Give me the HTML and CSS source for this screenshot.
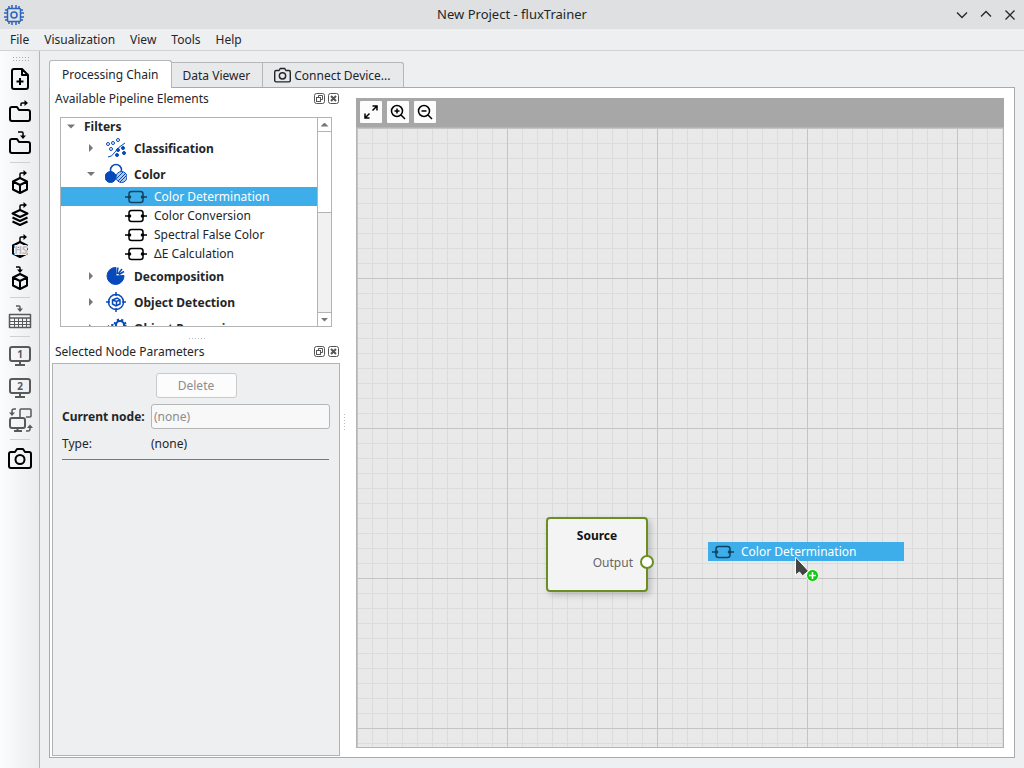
FILE: index.html
```html
<!DOCTYPE html>
<html lang="en">
<head>
<meta charset="utf-8">
<title>New Project - fluxTrainer</title>
<link rel="stylesheet" href="styles.css">
</head>
<body>
<svg class="defs" aria-hidden="true">
  <symbol id="node" viewBox="0 0 22 16"><rect x="4" y="2.500" width="14" height="11" rx="2.500"/><path d="M0 8h5M17 8h5"/><circle class="dot" cx="4.500" cy="8" r="1.800"/><circle class="dot" cx="17.500" cy="8" r="1.800"/></symbol>
  <symbol id="camera" viewBox="0 0 24 24"><path d="M1 7Q1 5 3 5h4l2-3h6l2 3h4q2 0 2 2v12q0 2-2 2H3q-2 0-2-2z"/><circle cx="12" cy="12.500" r="4.500"/></symbol>
  <symbol id="float" viewBox="0 0 11 11"><rect x=".5" y=".5" width="10" height="10" rx="2"/><rect x="2.500" y="4.500" width="4" height="4"/><path d="M4.500 4.500v-2h4v4h-2"/></symbol>
  <symbol id="close" viewBox="0 0 11 11"><rect x=".5" y=".5" width="10" height="10" rx="2"/><path stroke-width="2" d="m3 3 5 5m0-5-5 5"/></symbol>
  <symbol id="cube" viewBox="0 0 24 24"><path d="m12 8 7 3.500v8L12 23l-7-3.500v-8zM5 11.500l7 3.500 7-3.500M12 15v8"/></symbol>
  <symbol id="out" viewBox="0 0 24 24"><path stroke-width="1.500" d="M12 8V4q0-1 1-1h4"/><path class="head" d="M15.500 0 19 3l-3.500 3z"/></symbol>
  <symbol id="in" viewBox="0 0 24 24"><path stroke-width="1.500" d="M8 1h3q1 0 1 1v3"/><path class="head" d="M9 3.500 12 7l3-3.500z"/></symbol>
</svg>
<header class="titlebar">
  <svg class="app-icon" viewBox="0 0 20 20"><path d="M5 1v3M8 0v4M12 0v4M15 1v3M5 16v3M8 16v4M12 16v4M15 16v3M1 5h3M0 8h4M0 12h4M1 15h3M16 5h3M16 8h4M16 12h4M16 15h3"/><rect x="3.500" y="3.500" width="13" height="13" rx="1"/><circle cx="10" cy="10" r="3"/></svg>
  <h1>New Project - fluxTrainer</h1>
  <div class="window-buttons">
    <button aria-label="Minimize"><svg viewBox="0 0 12 12"><path d="m1 3.500 5 5 5-5"/></svg></button>
    <button aria-label="Maximize"><svg viewBox="0 0 12 12"><path d="m1 7.500 5-5 5 5"/></svg></button>
    <button aria-label="Close window"><svg viewBox="0 0 12 12"><path d="m1.500 1.500 9 9m0-9-9 9"/></svg></button>
  </div>
</header>
<nav class="menubar">
  <button>File</button><button>Visualization</button><button>View</button><button>Tools</button><button>Help</button>
</nav>
<div class="workspace">
  <aside class="toolbar">
    <div class="grip"></div>
    <button aria-label="New project"><svg viewBox="0 0 24 24"><path d="M6 2h8l6 6v12q0 2-2 2H6q-2 0-2-2V4q0-2 2-2zM14 2v6h6M12 11v7M8.500 14.500h7"/></svg></button>
    <button aria-label="Open project"><svg viewBox="0 0 24 24"><path d="M2 10q0-2 2-2h5l2 3h9q2 0 2 2v7q0 2-2 2H4q-2 0-2-2z"/><path stroke-width="1.500" d="M13 7V5q0-1 1-1h4"/><path class="head" d="M16.500 1 20 4l-3.500 3z"/></svg></button>
    <button aria-label="Save project"><svg viewBox="0 0 24 24"><path d="M2 10q0-2 2-2h5l2 3h9q2 0 2 2v7q0 2-2 2H4q-2 0-2-2z"/><path stroke-width="1.500" d="M10 1h4q1 0 1 1v4"/><path class="head" d="M12 4.500 15 8l3-3.500z"/></svg></button>
    <hr>
    <button aria-label="Export cube"><svg viewBox="0 0 24 24"><use href="#cube"/><use href="#out"/></svg></button>
    <button aria-label="Export layers"><svg viewBox="0 0 24 24"><path d="m12 8 7.500 3.500L12 15l-7.500-3.500zM4.500 15.500 12 19l7.500-3.500M4.500 19.500 12 23l7.500-3.500"/><use href="#out"/></svg></button>
    <button aria-label="Export HS cube"><svg viewBox="0 0 24 24"><use href="#cube"/><use href="#out"/><text class="hs" x="13" y="20">HS</text></svg></button>
    <button aria-label="Import cube"><svg viewBox="0 0 24 24"><use href="#cube"/><use href="#in"/></svg></button>
    <hr>
    <button class="muted" aria-label="Import table"><svg viewBox="0 0 24 24"><path stroke-width="1.500" d="M1.500 9.500h21v13h-21zM1.500 13h21"/><path stroke-width="1" d="M1.500 16.500h21M1.500 19.500h21M6.500 13v9M10.500 13v9M14.500 13v9M18.500 13v9"/><use href="#in"/></svg></button>
    <hr>
    <button class="muted" aria-label="Monitor 1"><svg viewBox="0 0 24 24"><rect x="2" y="3" width="20" height="14" rx="2"/><path d="M12 17v4M7 21h10"/><text x="12" y="14">1</text></svg></button>
    <button class="muted" aria-label="Monitor 2"><svg viewBox="0 0 24 24"><rect x="2" y="3" width="20" height="14" rx="2"/><path d="M12 17v4M7 21h10"/><text x="12" y="14">2</text></svg></button>
    <button class="muted" aria-label="Swap monitors"><svg viewBox="0 0 24 24"><path stroke-width="1.500" d="M12 9V2q0-1 1-1h9q1 0 1 1v6q0 1-1 1h-4M8 1H6Q4 1 4 3v3M18 23h2q2 0 2-2v-2"/><path class="head" d="m1 4.500 3 3.500 3-3.500zM19 20l3-3.500 3 3.500z"/><rect x="2" y="10" width="15" height="10" rx="2"/><path d="M9.500 20v3M6 23h8"/></svg></button>
    <hr>
    <button aria-label="Capture"><svg><use href="#camera"/></svg></button>
  </aside>
  <main class="content">
    <div class="tabs" role="tablist">
      <button class="tab active" role="tab" aria-selected="true">Processing Chain</button>
      <button class="tab" role="tab">Data Viewer</button>
      <button class="tab" role="tab"><svg><use href="#camera"/></svg>Connect Device...</button>
    </div>
    <section class="page">
      <div class="docks">
        <div class="dock-title"><h2>Available Pipeline Elements</h2><button aria-label="Float elements"><svg><use href="#float"/></svg></button><button aria-label="Close elements"><svg><use href="#close"/></svg></button></div>
        <div class="tree-box">
          <ul class="tree" role="tree">
            <li class="root" role="treeitem"><i class="arrow open"></i><b>Filters</b></li>
            <li class="group" role="treeitem"><i class="arrow"></i>
              <svg viewBox="0 0 22 22"><path d="M3 20q4 0 7-5t10-9" /><circle cx="3" cy="7" r="1.500"/><circle cx="8" cy="6" r="1.500"/><circle cx="13" cy="3" r="1.500"/><circle cx="6" cy="12" r="1.500"/><g class="fill"><circle cx="18" cy="11" r="1.500"/><circle cx="13" cy="13" r="1.500"/><circle cx="19" cy="16" r="1.500"/><circle cx="12" cy="18" r="1.500"/></g></svg><b>Classification</b></li>
            <li class="group" role="treeitem"><i class="arrow open"></i>
              <svg viewBox="0 0 22 22"><circle stroke-width="1.500" cx="11" cy="7" r="5.500"/><circle class="fill" cx="5.500" cy="14" r="5.500"/><circle class="pale" cx="16.500" cy="14" r="5.500"/><path d="m12 15 6-6m-5 9 8-8m-6 9 6-6"/></svg><b>Color</b></li>
            <li class="leaf selected" role="treeitem" aria-selected="true"><svg><use href="#node"/></svg><span>Color Determination</span></li>
            <li class="leaf" role="treeitem"><svg><use href="#node"/></svg><span>Color Conversion</span></li>
            <li class="leaf" role="treeitem"><svg><use href="#node"/></svg><span>Spectral False Color</span></li>
            <li class="leaf" role="treeitem"><svg><use href="#node"/></svg><span>ΔE Calculation</span></li>
            <li class="group" role="treeitem"><i class="arrow"></i>
              <svg viewBox="0 0 22 22"><path class="fill" d="M11 2.500A8.500 8.500 0 1 0 19 10.500L11 11z"/><path stroke-width="1.500" d="m12 9 1-6.500M13 9l4-5M14 9.500l5-3"/></svg><b>Decomposition</b></li>
            <li class="group" role="treeitem"><i class="arrow"></i>
              <svg viewBox="0 0 22 22"><circle stroke-width="1.500" cx="11" cy="11" r="7.500"/><path stroke-width="1.500" d="M11 1v4M11 17v4M1 11h4M17 11h4M7.500 9 12 7l3 2v4l-4 2-3.500-2zM7.500 9l4 1.500L15 9m-3.500 1.500V15"/></svg><b>Object Detection</b></li>
            <li class="group" role="treeitem"><i class="arrow"></i>
              <svg viewBox="0 0 22 22"><circle class="gear" cx="15" cy="8" r="5"/><circle stroke-width="2" cx="15" cy="8" r="4"/><circle class="gear" cx="7" cy="13" r="4.500"/><circle class="fill" cx="7" cy="13" r="4"/></svg><b>Object Processing</b></li>
          </ul>
          <div class="scrollbar"><button aria-label="Scroll up"><i class="up"></i></button><div class="track"><div class="thumb"></div></div><button aria-label="Scroll down"><i class="down"></i></button></div>
        </div>
        <div class="splitter-h"></div>
        <div class="dock-title"><h2>Selected Node Parameters</h2><button aria-label="Float parameters"><svg><use href="#float"/></svg></button><button aria-label="Close parameters"><svg><use href="#close"/></svg></button></div>
        <div class="params">
          <button class="delete" disabled>Delete</button>
          <div class="fields">
            <label for="current"><b>Current node:</b></label><input id="current" type="text" value="(none)" disabled>
            <span>Type:</span><span>(none)</span>
          </div>
          <hr>
        </div>
      </div>
      <div class="splitter-v"></div>
      <div class="editor">
        <div class="editor-bar">
          <button aria-label="Fit view"><svg viewBox="0 0 16 16"><path d="m9.500 6.500 4.500-4.500M9.500 2H14v4.500M6.500 9.500 2 14m0-4.500V14h4.500"/></svg></button>
          <button aria-label="Zoom in"><svg viewBox="0 0 16 16"><circle cx="7" cy="7" r="5.500"/><path d="m11 11 4 4M7 4.500v5M4.500 7h5"/></svg></button>
          <button aria-label="Zoom out"><svg viewBox="0 0 16 16"><circle cx="7" cy="7" r="5.500"/><path d="m11 11 4 4M4.500 7h5"/></svg></button>
        </div>
        <div class="canvas">
          <div class="source"><b>Source</b><span>Output</span><i class="port"></i></div>
          <div class="drag"><svg><use href="#node"/></svg>Color Determination</div>
          <svg class="cursor" viewBox="0 0 26 28"><path class="pointer" d="M1.500 1v18l4-3 3 4 6-5z"/><circle cx="18.500" cy="19.500" r="6"/><path class="plus" d="M18.500 16v7M15 19.500h7"/></svg>
        </div>
      </div>
    </section>
  </main>
</div>
</body>
</html>
```
FILE: styles.css
```css
* { box-sizing: border-box; }
body { margin: 0; min-height: 100vh; display: flex; flex-direction: column; background: #eeeff1; color: #232629; font: 12px/19px "Noto Sans", sans-serif; }
button { margin: 0; padding: 0; border: 0; background: none; color: inherit; font: inherit; display: flex; align-items: center; justify-content: center; }
svg { fill: none; stroke: currentColor; flex: none; }
.defs { position: absolute; width: 0; height: 0; }
h1, h2 { margin: 0; font-size: 12px; font-weight: 400; }

.titlebar { height: 29px; display: grid; grid-template-columns: 80px 1fr 80px; align-items: center; background: #dee0e2; }
.titlebar h1 { font-size: 13px; text-align: center; }
.app-icon { width: 20px; height: 20px; margin-left: 4px; color: #2c63bd; stroke-width: 1.500; }
.window-buttons { display: flex; justify-content: flex-end; gap: 12px; padding-right: 8px; }
.window-buttons svg { width: 12px; height: 12px; stroke-width: 1.300; }
.menubar { height: 22px; display: flex; gap: 15px; padding-left: 10px; border-bottom: 1px solid #d1d3d5; }

.workspace { flex: 1; display: flex; }
.toolbar { width: 40px; border-right: 1px solid #b5b6b8; background: linear-gradient(90deg, #fbfcfe, #ebecee); color: #000; }
.grip { width: 18px; height: 6px; margin: 5px auto 1px 12px; background: radial-gradient(circle, #aaa 0 1px, transparent 1px) 0 0 / 3px 3px; }
.toolbar button { width: 39px; height: 32px; }
.toolbar svg { width: 24px; height: 24px; stroke-width: 2; overflow: visible; stroke-linejoin: round; }
.head { fill: currentColor; stroke: none; }
.toolbar hr { width: 20px; height: 1px; margin: 3px 10px; border: 0; background: #cfd0d2; }
.toolbar text { fill: currentColor; stroke: none; font: bold 10px "Noto Sans", sans-serif; text-anchor: middle; }
.toolbar .hs { fill: #bbb; stroke: #f4f5f7; stroke-width: 2; paint-order: stroke; }
.toolbar .muted { color: #58595b; }

.content { flex: 1; display: flex; flex-direction: column; padding: 9px 9px 10px; min-width: 0; }
.tabs { display: flex; align-items: flex-end; }
.tab { height: 25px; padding: 0 12px 0 11px; border: 1px solid #b5b6b8; border-left: 0; border-bottom: 0; background: #e8e9ea; }
.tab:last-child { border-top-right-radius: 3px; gap: 3px; }
.tab svg { width: 17px; height: 17px; stroke-width: 2; overflow: visible; }
.tab.active { height: 28px; margin-bottom: -1px; padding: 0 12px; border-left: 1px solid #b5b6b8; border-radius: 3px 3px 0 0; background: #fff; position: relative; }
.page { flex: 1; display: flex; padding: 0 10px 1px 2px; border: 1px solid #a9aaac; background: #fff; }

.docks { width: 288px; display: flex; flex-direction: column; }
.dock-title { height: 21px; display: flex; align-items: center; gap: 3px; padding: 0 1px 0 3px; }
.dock-title h2 { flex: 1; }
.dock-title svg { width: 11px; height: 11px; color: #555; }
.tree-box { height: 210px; margin: 8px 8px 0; display: flex; border: 1px solid #b2b3b5; }
.tree { flex: 1; margin: 0; padding: 0; list-style: none; overflow: hidden; }
.tree li { display: flex; align-items: center; white-space: nowrap; }
.root { height: 17px; padding-left: 6px; gap: 9px; }
.group { height: 26px; padding-left: 26px; }
.group svg { width: 22px; height: 22px; margin: 0 7px 0 10px; color: #0649ba; }
.fill { fill: currentColor; }
.pale { fill: #b5c9e9; }
.gear { stroke-width: 3; stroke-dasharray: 2 2; }
.leaf { height: 19px; padding-left: 64px; gap: 7px; }
.leaf svg, .drag svg { width: 22px; height: 16px; color: #000; stroke-width: 1.500; }
.dot { fill: currentColor; stroke: none; }
.leaf.selected { background: #3daee9; color: #fff; }
.leaf.selected svg, .drag svg { color: #124461; }
.arrow { width: 8px; height: 8px; background: #777; clip-path: polygon(2px 0, 6px 4px, 2px 8px); }
.arrow.open { clip-path: polygon(0 2px, 8px 2px, 4px 6px); }
.scrollbar { width: 14px; display: flex; flex-direction: column; border-left: 1px solid #b2b3b5; background: #f1f1f1; }
.scrollbar button { height: 13px; background: #fff; }
.up, .down { width: 8px; height: 4px; background: #777; clip-path: polygon(0 100%, 50% 0, 100% 100%); }
.down { clip-path: polygon(0 0, 100% 0, 50% 100%); }
.track { flex: 1; border: solid #b2b3b5; border-width: 1px 0; }
.thumb { height: 81px; border-bottom: 1px solid #b2b3b5; background: #fff; }
.splitter-h { height: 14px; background: repeating-linear-gradient(90deg, #bbb 0 1px, transparent 1px 3px) 137px 11px / 17px 1px no-repeat; }
.splitter-v { width: 16px; background: repeating-linear-gradient(#bbb 0 1px, transparent 1px 3px) 4px 50% / 1px 17px no-repeat; }
.params { flex: 1; margin-top: 1px; padding: 9px 9px; border: 1px solid #b2b3b5; background: #eeeff1; }
.delete { width: 81px; height: 25px; margin: 0 auto 6px; border: 1px solid #c9cacb; border-radius: 3px; background: #fcfcfc; color: #8b8d8e; }
.fields { display: grid; grid-template-columns: 89px 1fr; row-gap: 5px; align-items: center; }
.fields input { width: 100%; height: 25px; padding: 0 2px; border: 1px solid #b5b6b8; border-radius: 3px; background: #f8f8f9; color: #8b8d8e; font: inherit; }
.params hr { height: 1px; margin: 6px 1px 0 0; border: 0; background: #75777a; }

.editor { flex: 1; min-width: 0; margin: 10px 0 8px; display: flex; flex-direction: column; background: #a7a7a7; }
.editor-bar { height: 29px; display: flex; gap: 5px; padding: 3px 4px; }
.editor-bar button { width: 22px; height: 22px; background: #fcfcfc; border-radius: 1px; color: #000; }
.editor-bar svg { width: 16px; height: 16px; stroke-width: 1.500; }
.canvas { flex: 1; position: relative; border: 1px solid #b4b4b4; background: linear-gradient(90deg, #c4c4c4 1px, transparent 1px) 0 0 / 150px 150px, linear-gradient(#c4c4c4 1px, transparent 1px) 0 0 / 150px 150px, linear-gradient(90deg, #dcdcdc 1px, transparent 1px) 0 0 / 15px 15px, linear-gradient(#dcdcdc 1px, transparent 1px) 0 0 / 15px 15px, #e9e9e9; }
.source { position: absolute; left: 189px; top: 389px; width: 102px; height: 75px; padding: 7px 13px; border: 2px solid #6b8e23; border-radius: 4px; background: #f4f4f4; color: #111; box-shadow: 3px 3px 6px #0003; display: flex; flex-direction: column; gap: 8px; text-align: center; }
.source span { color: #666; text-align: right; }
.port { position: absolute; right: -8px; top: 36px; width: 14px; height: 14px; border: 2px solid #6b8e23; border-radius: 50%; background: #fff; }
.drag { position: absolute; left: 351px; top: 414px; width: 196px; height: 19px; padding-left: 4px; display: flex; align-items: center; gap: 7px; background: #3daee9; color: #fff; }
.cursor { position: absolute; left: 437px; top: 428px; width: 26px; height: 28px; fill: #15c815; stroke: #fff; stroke-width: 1; }
.pointer { fill: #444; }
.plus { stroke-width: 1.500; }
```
